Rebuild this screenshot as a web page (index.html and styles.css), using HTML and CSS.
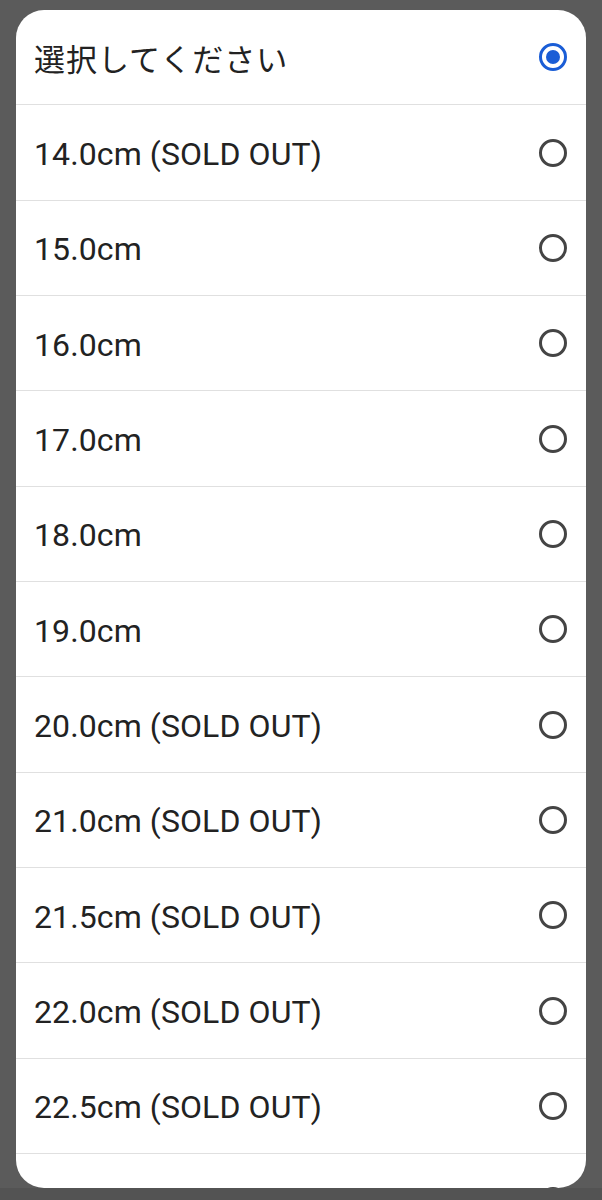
FILE: index.html
```html
<!DOCTYPE html>
<html lang="ja">
<head>
    <meta charset="UTF-8">
    <meta name="viewport" content="width=device-width, initial-scale=1.0">
    <title>サイズ選択</title>
    <link rel="stylesheet" href="styles.css">
</head>
<body>
    <div class="sheet">
        <label class="option">
            <span class="label ja">選択してください</span>
            <span class="radio checked"></span>
        </label>
        <label class="option"><span class="label">14.0cm (SOLD OUT)</span><span class="radio"></span></label>
        <label class="option"><span class="label">15.0cm</span><span class="radio"></span></label>
        <label class="option"><span class="label">16.0cm</span><span class="radio"></span></label>
        <label class="option"><span class="label">17.0cm</span><span class="radio"></span></label>
        <label class="option"><span class="label">18.0cm</span><span class="radio"></span></label>
        <label class="option"><span class="label">19.0cm</span><span class="radio"></span></label>
        <label class="option"><span class="label">20.0cm (SOLD OUT)</span><span class="radio"></span></label>
        <label class="option"><span class="label">21.0cm (SOLD OUT)</span><span class="radio"></span></label>
        <label class="option"><span class="label">21.5cm (SOLD OUT)</span><span class="radio"></span></label>
        <label class="option"><span class="label">22.0cm (SOLD OUT)</span><span class="radio"></span></label>
        <label class="option"><span class="label">22.5cm (SOLD OUT)</span><span class="radio"></span></label>
        <!-- next row is cut off by the screen edge -->
        <label class="option"><span class="label"></span><span class="radio"></span></label>
    </div>
    <div class="navbar"></div>
</body>
</html>
```

FILE: styles.css
```css
html, body {
    margin: 0;
    padding: 0;
}
body {
    background-color: #5b5b5b;
    font-family: Roboto, "Noto Sans CJK JP", sans-serif;
    height: 1200px;
    overflow: hidden;
}
.sheet {
    margin: 10px 16px 0;
    height: 1178px;
    background-color: #fff;
    border-radius: 28px;
    overflow: hidden;
}
.option {
    display: flex;
    align-items: center;
    justify-content: space-between;
    box-sizing: border-box;
    height: 95.35px;
    padding: 0 19px 0 18px;
    border-bottom: 1px solid #e0e0e0;
}
.label {
    font-size: 32px;
    color: #222;
    letter-spacing: 0.1px;
    padding-top: 3px;
}
.label.ja {
    font-family: "Noto Sans CJK JP", sans-serif;
    font-size: 31px;
    letter-spacing: 1px;
    padding-top: 0;
}
.radio {
    width: 28px;
    height: 28px;
    box-sizing: border-box;
    border: 3px solid #444;
    border-radius: 50%;
    position: relative;
}
.radio.checked {
    border-color: #1a5dd6;
}
.radio.checked::after {
    content: "";
    position: absolute;
    left: 4px;
    top: 4px;
    width: 14px;
    height: 14px;
    border-radius: 50%;
    background-color: #1a5dd6;
}
.navbar {
    height: 12px;
    background-color: #535353;
}
```
